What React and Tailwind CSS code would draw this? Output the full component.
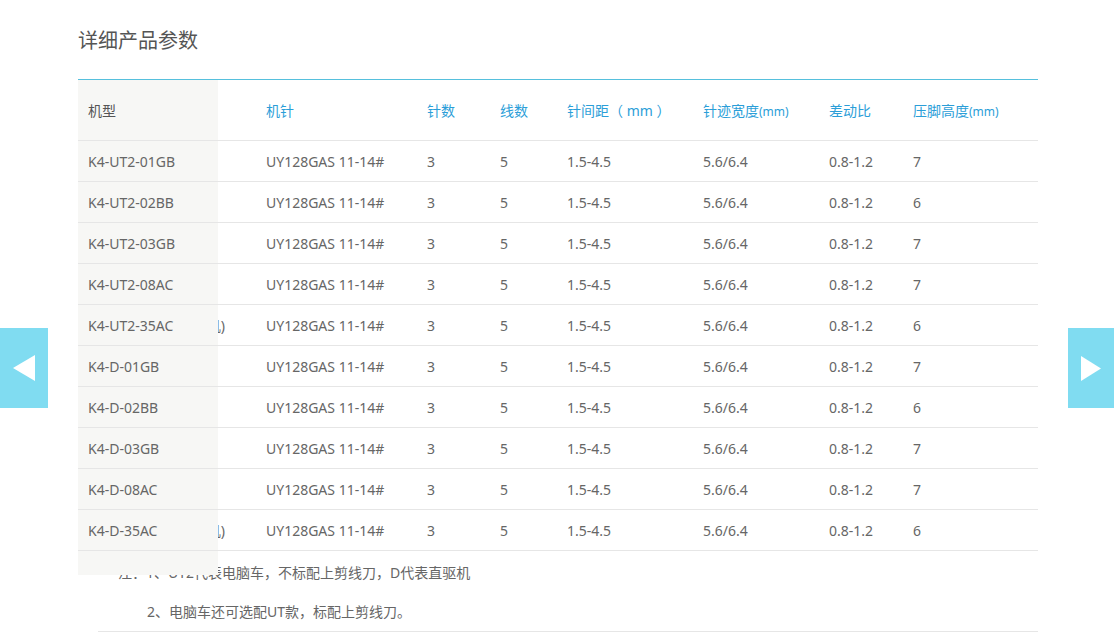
import React from "react";

const rows = [
  ["K4-UT2-01GB", "", "7"],
  ["K4-UT2-02BB", "", "6"],
  ["K4-UT2-03GB", "", "7"],
  ["K4-UT2-08AC", "", "7"],
  ["K4-UT2-35AC", "(电脑机)", "6"],
  ["K4-D-01GB", "", "7"],
  ["K4-D-02BB", "", "6"],
  ["K4-D-03GB", "", "7"],
  ["K4-D-08AC", "", "7"],
  ["K4-D-35AC", "(直驱机)", "6"],
];

const font = { fontFamily: '"Noto Sans", "Noto Sans CJK SC", sans-serif' };

function Mm() {
  return <span className="text-[12px]">(mm)</span>;
}

export default function App() {
  return (
    <div className="relative w-[1114px] h-[643px] bg-white overflow-hidden text-[#666]" style={font}>
      <div className="pl-[78px] w-[1038px]">
        <h2 className="pt-[27px] h-[79px] text-[20px] leading-[28px] text-[#555] font-normal">详细产品参数</h2>
        <div className="relative">
          <div className="h-[1px] bg-[#56c0dd]"></div>
          <div className="flex h-[61px] border-b border-[#e6e6e6] items-center text-[14px] text-[#2b9ed8]">
            <div className="w-[100px] pl-[10px] text-[#555]">机型</div>
            <div className="w-[78px]"></div>
            <div className="w-[161px] pl-[10px]">机针</div>
            <div className="w-[73px] pl-[10px]">针数</div>
            <div className="w-[67px] pl-[10px]">线数</div>
            <div className="w-[136px] pl-[10px] whitespace-pre">针间距（ mm ）</div>
            <div className="w-[126px] pl-[10px]">针迹宽度<Mm /></div>
            <div className="w-[84px] pl-[10px]">差动比</div>
            <div className="w-[135px] pl-[10px]">压脚高度<Mm /></div>
          </div>
          {rows.map((r) => (
            <div key={r[0]} className="flex h-[41px] border-b border-[#e6e6e6] items-center text-[14px]">
              <div className="w-[100px] pl-[10px]">{r[0]}</div>
              <div className="w-[78px] pr-[31px] flex justify-end whitespace-nowrap">
                <span>{r[1]}</span>
              </div>
              <div className="w-[161px] pl-[10px]">UY128GAS 11-14#</div>
              <div className="w-[73px] pl-[10px]">3</div>
              <div className="w-[67px] pl-[10px]">5</div>
              <div className="w-[136px] pl-[10px]">1.5-4.5</div>
              <div className="w-[126px] pl-[10px]">5.6/6.4</div>
              <div className="w-[84px] pl-[10px]">0.8-1.2</div>
              <div className="w-[135px] pl-[10px]">{r[2]}</div>
            </div>
          ))}
          <div className="ml-[20px] pt-[2px] border-b border-[#e6e6e6] text-[14px]">
            <div className="h-[39px] leading-[39px] pl-[20px]">注：1、UT2代表电脑车，不标配上剪线刀，D代表直驱机</div>
            <div className="h-[39px] leading-[39px] pl-[49px]">2、电脑车还可选配UT款，标配上剪线刀。</div>
          </div>
          <div className="absolute left-0 top-[1px] w-[140px] h-[495px] bg-[#f7f7f5]">
            <div className="h-[61px] border-b border-[#e6e6e6] flex items-center pl-[10px] text-[14px] text-[#555]">机型</div>
            {rows.map((r) => (
              <div key={r[0]} className="h-[41px] border-b border-[#e6e6e6] flex items-center pl-[10px] text-[14px]">{r[0]}</div>
            ))}
          </div>
        </div>
      </div>
      <div className="absolute left-0 top-[328px] w-[48px] h-[80px] bg-[#80dcf1] flex items-center justify-center">
        <svg width="22" height="26" viewBox="0 0 22 26"><polygon points="0,13 22,0 22,26" fill="#fff" /></svg>
      </div>
      <div className="absolute left-[1068px] top-[328px] w-[46px] h-[80px] bg-[#80dcf1] flex items-center justify-center">
        <svg width="20" height="25" viewBox="0 0 20 25"><polygon points="0,0 20,12.5 0,25" fill="#fff" /></svg>
      </div>
    </div>
  );
}
